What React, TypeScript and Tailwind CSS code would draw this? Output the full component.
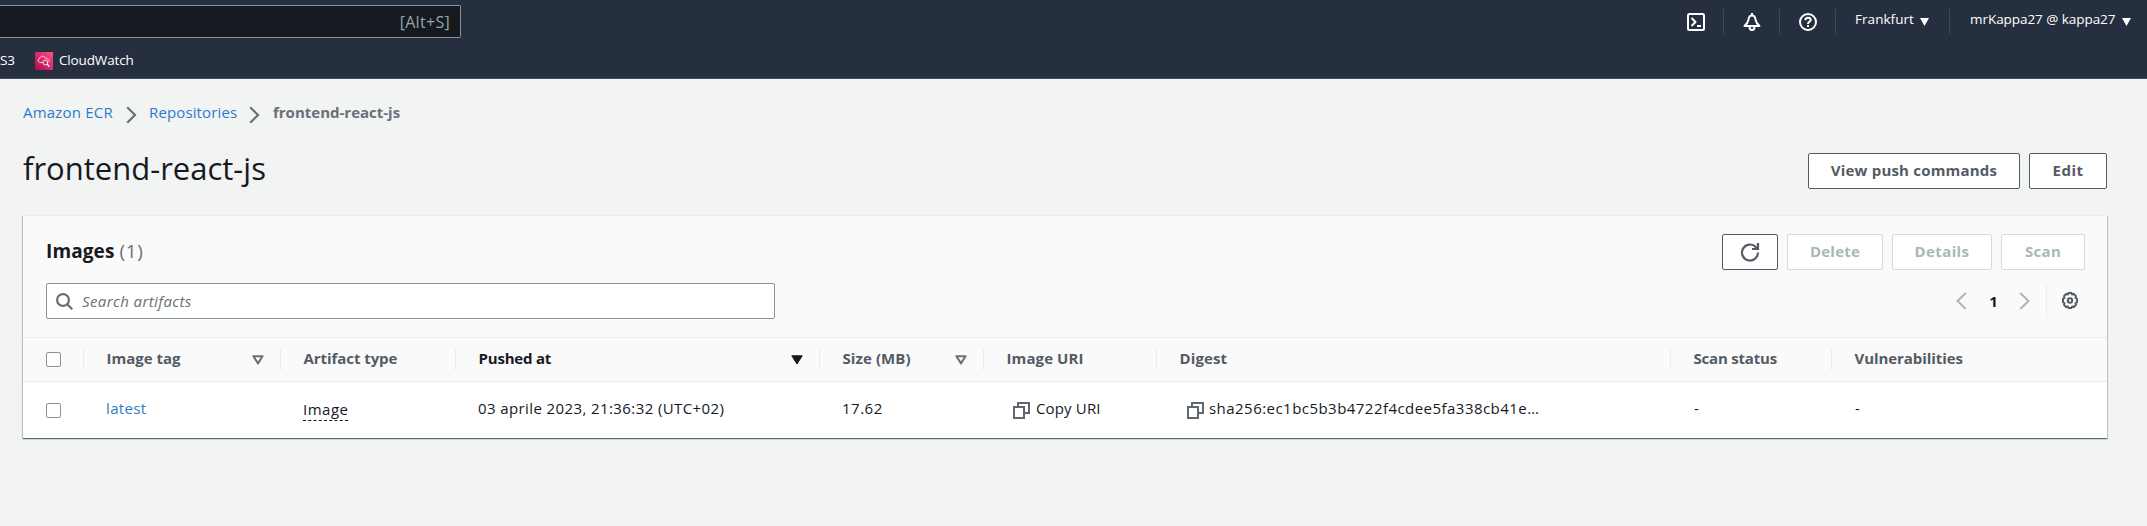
import React from 'react';

const linkColor = 'text-[#2b7bc8]';

function Caret({ hollow = false }: { hollow?: boolean }) {
  return hollow ? (
    <svg width="12" height="10" viewBox="0 0 12 10" fill="none" stroke="#687078" strokeWidth="2" strokeLinejoin="round">
      <path d="M1.4 1.2h9.2L6 8.4z" />
    </svg>
  ) : (
    <svg width="12" height="10" viewBox="0 0 12 10" fill="#16191f" stroke="#16191f" strokeLinejoin="round">
      <path d="M.8.8h10.4L6 9z" />
    </svg>
  );
}

function MenuCaret() {
  return (
    <svg width="9" height="8" viewBox="0 0 9 8" fill="#fff">
      <path d="M0 0h9L4.5 8z" />
    </svg>
  );
}

function Crumb() {
  return (
    <svg width="11" height="18" viewBox="0 0 11 18" fill="none" stroke="#687078" strokeWidth="2.2">
      <path d="M1.2 1.2 9 9l-7.8 7.8" />
    </svg>
  );
}

function CopyIcon() {
  return (
    <svg className="shrink-0" width="17" height="17" viewBox="0 0 17 17" fill="none" stroke="#5f6670" strokeWidth="2">
      <path d="M1 5h10v11H1z" />
      <path d="M5 5V1h11v10h-5" />
    </svg>
  );
}

function CheckBox() {
  return <span className="block h-[15px] w-[15px] rounded-[2px] border border-[#879596] bg-white" />;
}

function Button({ children, className }: { children: React.ReactNode; className: string }) {
  return (
    <button className={`flex h-9 items-center justify-center rounded-[2px] border bg-white pb-[3px] text-[15px] font-bold ${className}`}>
      {children}
    </button>
  );
}

const columns = [
  { label: 'Image tag', width: 'w-[197px]', track: '', sort: 'hollow' },
  { label: 'Artifact type', width: 'w-[175px]', track: 'tracking-[-0.06px]', sort: '' },
  { label: 'Pushed at', width: 'w-[364px]', track: 'tracking-[-0.2px]', sort: 'solid' },
  { label: 'Size (MB)', width: 'w-[164px]', track: 'tracking-[0.1px]', sort: 'hollow' },
  { label: 'Image URI', width: 'w-[173px]', track: 'tracking-[0.1px]', sort: '' },
  { label: 'Digest', width: 'w-[514px]', track: 'tracking-[0.1px]', sort: '' },
  { label: 'Scan status', width: 'w-[161px]', track: 'tracking-[-0.2px]', sort: '' },
  { label: 'Vulnerabilities', width: 'flex-1', track: 'tracking-[-0.07px]', sort: '' },
];

export default function App() {
  return (
    <div className="flex h-[526px] w-[2147px] flex-col overflow-hidden bg-[#f2f3f3] font-['Open_Sans',sans-serif] text-[15px] leading-5 text-[#16191f]">
      <header className="flex h-[79px] shrink-0 items-start justify-between border-b border-[#414d5c] bg-[#262f3f] text-[13.5px] font-medium text-white">
        <div className="w-[461px]">
          <div className="mt-[5px] flex h-[33px] items-center justify-end rounded-r-[2px] border border-l-0 border-[#879596] bg-[#16191f] pr-[10px] text-base font-normal tracking-[0.3px] text-[#95a5a6]">
            [Alt+S]
          </div>
          <div className="mt-[13px] flex h-[20px] items-center">
            <span className="w-[35px] pb-[2px] tracking-[-0.2px]">S3</span>
            <svg width="18" height="18" viewBox="0 0 18 18" fill="none">
              <defs>
                <linearGradient id="cw" x1="0" y1="1" x2="1" y2="0">
                  <stop stopColor="#b0084d" />
                  <stop offset="1" stopColor="#ff4f8b" />
                </linearGradient>
              </defs>
              <path d="M0 0h18v18H0z" fill="url(#cw)" />
              <g stroke="#fff" strokeWidth=".8" strokeLinecap="round">
                <path d="M7.500 10.500H5.300C3.800 10.300 3 9.500 3 8.500 3 7.500 3.900 6.800 4.700 6.700 4.800 5 6 4.200 7.500 4.200c1.400 0 2.400.8 2.900 2 1-.4 2 .2 2.200 1.200 1 .2 1.700.8 1.800 1.700" />
                <circle cx="10.400" cy="10.500" r="2.400" />
                <path d="m12.400 12.400 1.600 1.800" strokeWidth="1.300" />
              </g>
            </svg>
            <span className="ml-[6px] pb-[2px] tracking-[-0.15px]">CloudWatch</span>
          </div>
        </div>

        <div className="mt-[9px] flex h-[25px] items-center">
          <div className="flex h-full w-[36px] items-center">
            <svg width="18" height="18" viewBox="0 0 18 18" fill="none" stroke="#fff" strokeWidth="2" strokeLinejoin="round">
              <rect x="1" y="1" width="16" height="16" rx="1.500" />
              <path d="m4.500 5 4 4-4 4M10 13h4" />
            </svg>
          </div>
          <div className="flex h-full w-[56px] items-center justify-center border-l border-[#414750]">
            <svg width="18" height="18" viewBox="0 0 18 18" fill="none" stroke="#fff" strokeWidth="2" strokeLinejoin="round">
              <path d="M9 0v2M1.500 13c2.500-2 3.500-3.500 4-6.500C5.800 4.200 7 2.600 9 2.600s3.200 1.600 3.500 3.900c.5 3 1.500 4.500 4 6.500zM6.500 14c0 2 1 3 2.500 3s2.500-1 2.500-3" />
            </svg>
          </div>
          <div className="flex h-full w-[56px] items-center justify-center border-l border-[#414750]">
            <svg width="18" height="18" viewBox="0 0 18 18" fill="none" stroke="#fff" strokeWidth="2">
              <circle cx="9" cy="9" r="8" />
              <path d="M6.300 7.300C6.300 5.700 7.400 4.800 9 4.800s2.700.9 2.700 2.200C11.700 8.800 9 8.600 9 11M9 12v2" />
            </svg>
          </div>
          <div className="flex h-full w-[114px] items-center border-l border-[#414750] pl-[19px]">
            <span className="w-[65px] pb-[5px] tracking-[0.05px]">Frankfurt</span>
            <MenuCaret />
          </div>
          <div className="flex h-full w-[198px] items-center border-l border-[#414750] pl-[20px]">
            <span className="w-[152px] whitespace-nowrap pb-[5px] tracking-[-0.05px]">mrKappa27 @ kappa27</span>
            <MenuCaret />
          </div>
        </div>
      </header>

      <main className="pl-[23px] pr-[40px]">
        <nav className="mt-[24px] flex h-[20px] items-center">
          <span className={`w-[103px] pb-[2px] tracking-[0.2px] ${linkColor}`}>Amazon ECR</span>
          <span className="pt-[3px]"><Crumb /></span>
          <span className={`ml-[12px] w-[100px] pb-[2px] tracking-[0.13px] ${linkColor}`}>Repositories</span>
          <span className="pt-[3px]"><Crumb /></span>
          <span className="ml-[13px] pb-[2px] font-bold text-[#687078]">frontend-react-js</span>
        </nav>

        <div className="mt-[26px] flex h-[44px] items-start justify-between">
          <h1 className="-mt-px text-[31px] leading-[40px]">frontend-react-js</h1>
          <div className="mt-[4px] flex gap-[9px]">
            <Button className="w-[212px] border-[#545b64] tracking-[0.2px] text-[#545b64]">View push commands</Button>
            <Button className="w-[78px] border-[#545b64] tracking-[0.5px] text-[#545b64]">Edit</Button>
          </div>
        </div>

        <section className="mt-[22px] h-[223px] border-t border-[#eaeded] bg-[#fafafa] shadow-[0_1px_1px_0_rgba(0,28,36,0.5),1px_1px_1px_0_rgba(0,28,36,0.15),-1px_1px_1px_0_rgba(0,28,36,0.15)]">
          <div className="flex h-[67px] items-start justify-between pl-[23px] pr-[22px] pt-[18px]">
            <h2 className="mt-[5px] text-[19px] font-bold leading-6 tracking-[0.1px]">
              Images <span className="font-normal tracking-[0.6px] text-[#687078]">(1)</span>
            </h2>
            <div className="flex gap-[9px]">
              <Button className="w-[56px] border-[#545b64]">
                <svg className="mt-[3px]" width="20" height="20" viewBox="0 0 20 20" fill="none" stroke="#545b64" strokeWidth="2.200">
                  <path d="M18 10.500A8 8 0 1 1 15.800 5L18 7" />
                  <path d="M18 1v6h-6" />
                </svg>
              </Button>
              <Button className="w-[96px] border-[#d5dbdb] tracking-[0.22px] text-[#aab7b8]">Delete</Button>
              <Button className="w-[100px] border-[#d5dbdb] tracking-[0.38px] text-[#aab7b8]">Details</Button>
              <Button className="w-[84px] border-[#d5dbdb] tracking-[0.32px] text-[#aab7b8]">Scan</Button>
            </div>
          </div>

          <div className="flex h-[54px] items-start justify-between pl-[23px] pr-[28px]">
            <div className="flex h-9 w-[729px] items-center rounded-[2px] border border-[#879596] bg-white pl-[9px]">
              <svg width="17" height="17" viewBox="0 0 17 17" fill="none" stroke="#687078" strokeWidth="2.200">
                <circle cx="7" cy="7" r="5.900" />
                <path d="m11 11 5.300 5.300" />
              </svg>
              <span className="ml-[9px] italic tracking-[0.4px] text-[#687078]">Search artifacts</span>
            </div>
            <div className="flex h-9 items-center">
              <svg width="11" height="18" viewBox="0 0 11 18" fill="none" stroke="#aab7b8" strokeWidth="2">
                <path d="M9.800 1 1.500 9l8.300 8" />
              </svg>
              <span className="w-[52px] pb-px pl-px text-center font-bold">1</span>
              <svg width="11" height="18" viewBox="0 0 11 18" fill="none" stroke="#aab7b8" strokeWidth="2">
                <path d="M1.200 1 9.500 9l-8.300 8" />
              </svg>
              <span className="ml-[16px] h-full w-px bg-[#eaeded]" />
              <svg className="ml-[14px]" width="18" height="18" viewBox="0 0 18 18" fill="none" stroke="#545b64" strokeWidth="2">
                <path strokeLinejoin="round" d="M7.500 1h3l.6 1.500 1.800-.5 2.100 2.100-.5 1.800 1.500.8v3.600l-1.500.8.5 1.800-2.100 2.100-1.800-.5-.6 1.500h-3l-.6-1.500-1.800.5L3 12.900l.5-1.800-1.500-.8V6.700l1.500-.8L3 4.100 5.100 2l1.800.5z" />
                <circle cx="9" cy="8.500" r="2.200" />
              </svg>
            </div>
          </div>

          <div className="flex h-[45px] items-center border-y border-[#eaeded] font-bold text-[#545b64]">
            <span className="w-[60px] pl-[23px]"><CheckBox /></span>
            {columns.map((c) => (
              <div key={c.label} className={`flex h-[21px] items-center justify-between border-l border-[#eaeded] pl-[22.5px] pr-[16px] ${c.width}`}>
                <span className={`pb-[3px] ${c.track} ${c.sort === 'solid' ? 'text-[#16191f]' : ''}`}>{c.label}</span>
                {c.sort !== '' && <Caret hollow={c.sort === 'hollow'} />}
              </div>
            ))}
          </div>

          <div className="flex h-[56px] items-center whitespace-nowrap bg-white">
            <span className="w-[83px] pl-[23px]"><CheckBox /></span>
            <span className={`w-[197px] pb-[4px] tracking-[0.35px] ${linkColor}`}>latest</span>
            <span className="w-[175px] pb-px">
              <span className="inline-block h-[20px] border-b border-dashed border-[#16191f] leading-[17px] tracking-[0.5px]">Image</span>
            </span>
            <span className="w-[364px] pb-[4px] tracking-[0.4px]">03 aprile 2023, 21:36:32 (UTC+02)</span>
            <span className="w-[171px] pb-[4px] tracking-[0.5px]">17.62</span>
            <span className="flex w-[174px] items-center gap-[6px]">
              <CopyIcon />
              <span className="pb-[4px] tracking-[0.15px]">Copy URI</span>
            </span>
            <span className="flex w-[507px] items-center gap-[5px]">
              <CopyIcon />
              <span className="pb-[4px] tracking-[0.46px]">sha256:ec1bc5b3b4722f4cdee5fa338cb41e…</span>
            </span>
            <span className="w-[161px] pb-[4px]">-</span>
            <span className="pb-[4px]">-</span>
          </div>
        </section>
      </main>
    </div>
  );
}
